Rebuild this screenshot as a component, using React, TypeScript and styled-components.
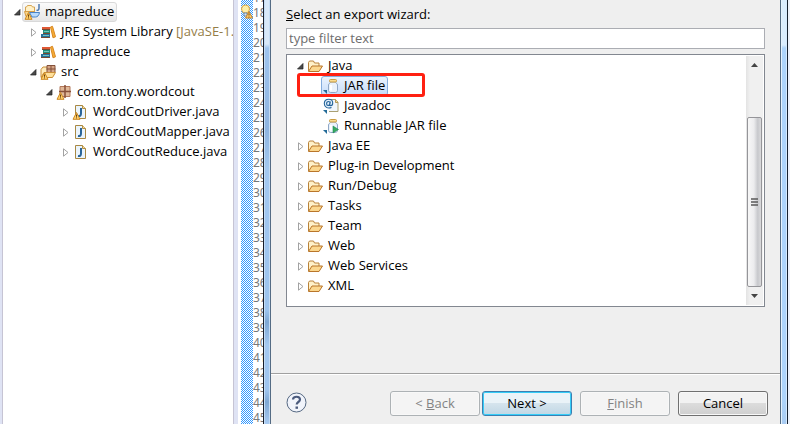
import React from "react";
import styled, { createGlobalStyle, css } from "styled-components";

const Global = createGlobalStyle`
  * { box-sizing: border-box; }
  body {
    margin: 0;
    overflow: hidden;
    background: #fff;
    color: #000;
    font: 13px/20px "Open Sans", "Noto Sans", sans-serif;
  }
  ul { list-style: none; margin: 0; padding: 0; }
  svg { display: block; flex: none; }
`;

const Screen = styled.main`
  display: flex;
  height: 100vh;
  overflow: hidden;
`;

const Explorer = styled.nav`
  flex: 0 0 238px;
  min-width: 0;
  display: flex;
  background: #dfe3f4;
  padding: 0 4px 0 2px;
`;

const ExplorerPane = styled.div`
  flex: 1;
  min-width: 0;
  overflow: hidden;
  background: #fff;
  border: solid #c6c4d4;
  border-width: 0 1px;
  padding: 2px 0 0 10px;
`;

const TreeRow = styled.div<{ $level: number }>`
  display: flex;
  align-items: center;
  height: 20px;
  padding-left: ${(p) => p.$level * 16}px;
  white-space: nowrap;
`;

const Twisty = styled.span`
  flex: none;
  width: 9px;
  display: flex;
  justify-content: center;
`;

const ItemLabel = styled.span<{ $selected?: "inactive" | "active" }>`
  display: flex;
  align-items: flex-start;
  gap: 5px;
  height: 20px;
  line-height: 16px;
  padding: 0 2px 0 1px;
  border: 1px solid transparent;
  border-radius: 3px;
  > svg { align-self: center; }
  ${(p) =>
    p.$selected === "inactive" &&
    css`
      border-color: #d9d9d9;
      background: linear-gradient(#fafafa, #e6e6e6);
    `}
  ${(p) =>
    p.$selected === "active" &&
    css`
      border-color: #84acdd;
      background: linear-gradient(#ebf3fd, #c5dcfa);
    `}
`;

const Qualifier = styled.span`
  color: #957d47;
`;

const Editor = styled.section`
  flex: 0 0 26px;
  display: flex;
  padding-left: 3px;
  background: #fff;
  border-right: 1px solid #171c2a;
  overflow: hidden;
`;

const Ruler = styled.div`
  flex: 0 0 12px;
  padding-top: 4px;
  background: repeating-conic-gradient(#3399ff 0 25%, #fff 0 50%) 0 0 / 2px 2px;
`;

const LineNumbers = styled.ol`
  list-style: none;
  margin: -10px 0 0;
  padding: 0;
  width: 10px;
  overflow: hidden;
  color: #787878;
  font: 12px/15px "Noto Sans", sans-serif;
`;

const Dialog = styled.section`
  flex: 1;
  min-width: 0;
  display: flex;
  background: #efefef;
`;

const FrameEdge = styled.div<{ $side: "left" | "right" }>`
  flex: none;
  width: ${(p) => (p.$side === "left" ? 7 : 10)}px;
  border: solid #546b84;
  border-width: ${(p) => (p.$side === "left" ? "0 1px 0 0" : "0 0 0 1px")};
  background: ${(p) =>
    p.$side === "left"
      ? "linear-gradient(90deg, #c5dcf4 0 1px, transparent 1px 5px, #c5dcf4 5px), linear-gradient(#d9e8f8 0 44px, #9fc4ee 48px, #8fb4e0 130px, #a4c8f0 170px, #9dc3ed 310px, #7fa7d3 322px, #a4c8f0 345px, #9fc4ee 390px, #7fa7d3 402px, #a9cbf2 424px)"
      : "linear-gradient(90deg, #e3f1fd 0 1px, transparent 1px 5px, #d5eaff 5px 6px, #15202f 6px 7px, #eef2fb 7px), linear-gradient(#d9ecfe 0 45px, #acd3fb 48px 400px, #a9cbf2)"};
`;

const DialogMain = styled.form`
  flex: 1;
  min-width: 0;
  display: flex;
  flex-direction: column;
`;

const WizardBody = styled.div`
  flex: 1;
  display: flex;
  flex-direction: column;
  padding: 4px 15px 0;
`;

const FilterLabel = styled.label`
  display: block;
  height: 24px;
  &::first-letter { text-decoration: underline; }
`;

const FilterInput = styled.input`
  width: 100%;
  height: 21px;
  border: 1px solid #abadb3;
  padding: 0 2px 2px;
  margin-bottom: 5px;
  background: #fff;
  font: inherit;
  &::placeholder { color: #6d6d6d; opacity: 1; }
`;

const WizardList = styled.div`
  display: flex;
  height: 253px;
  background: #fff;
  border: 1px solid #828790;
  padding: 1px;
`;

const WizardItems = styled.ul`
  flex: 1;
  padding: 0 0 0 8px;
`;

const HighlightAnchor = styled.li`
  position: relative;
`;

const Highlight = styled.div`
  position: absolute;
  left: 1px;
  top: -3px;
  width: 128px;
  height: 24px;
  border: 3px solid #ff2011;
  border-radius: 3px;
`;

const Scrollbar = styled.div`
  flex: 0 0 17px;
  display: flex;
  flex-direction: column;
  align-items: center;
  background: linear-gradient(90deg, #e3e3e3, #f0f0f0 4px);
`;

const ScrollArrow = styled.div`
  height: 18px;
  display: flex;
  align-items: center;
`;

const ScrollGap = styled.div`
  height: 43px;
`;

const ScrollThumb = styled.div`
  flex: 1;
  width: 15px;
  display: flex;
  align-items: center;
  justify-content: center;
  border: 1px solid #959599;
  border-radius: 2px;
  background: linear-gradient(90deg, #f7f7f7, #ececee 45%, #c7c8cc 75%, #dadadc);
`;

const Footer = styled.footer`
  display: flex;
  align-items: center;
  height: 51px;
  border-top: 1px solid #a0a0a0;
  box-shadow: inset 0 1px #fff;
  padding: 9px 12px 0 15px;
`;

const HelpButton = styled.button`
  width: 21px;
  height: 21px;
  padding: 0;
  border: 0;
  background: none;
  margin: 0 auto 2px 0;
`;

const ButtonGroup = styled.div<{ $gap: number }>`
  display: flex;
  gap: ${(p) => p.$gap}px;
`;

const PushButton = styled.button<{ $primary?: boolean }>`
  width: 90px;
  height: 25px;
  padding: 0 0 2px;
  border: 1px solid #707070;
  border-radius: 3px;
  background: linear-gradient(#f2f2f2 0 50%, #dcdcdc 50%, #cfcfcf);
  box-shadow: inset 0 0 0 1px #f8f8f8;
  color: #000;
  font: inherit;
  &:disabled {
    border-color: #adb2b5;
    background: #f4f4f4;
    color: #838383;
  }
  ${(p) =>
    p.$primary &&
    css`
      border-color: #3c7fb1;
      background: linear-gradient(#eaf3f8 0 50%, #d5e4ed 50%, #c0d7e5);
      box-shadow: inset 0 0 0 1px #35cdf8;
    `}
`;

const WarningMark = () => (
  <g>
    <path d="M4.500 8.500 8 15.300H1z" fill="#ffd06a" stroke="#cc8924" strokeLinejoin="round" />
    <path d="M4.500 10.500v2.300M4.500 13.400v1" stroke="#684312" />
  </g>
);

const Icon = ({ children }: { children: React.ReactNode }) => (
  <svg width="16" height="16" viewBox="0 0 16 16" aria-hidden="true">{children}</svg>
);

const ProjectIcon = () => (
  <Icon>
    <path d="M1.500 8V3h1l1-1.500h4L8.500 3h2v5" fill="#fff0c6" stroke="#d6a552" />
    <path d="M.5 7.500h9.500L8 12.500H2z" fill="#f8d58b" stroke="#d69d45" />
    <path d="M5.500 8.500h10c-.5 3-2 4.500-4 4.500H8z" fill="#b8dafb" stroke="#4a83c6" />
    <path d="M15 0v4c0 2-1 2.500-2.500 2.300" fill="none" stroke="#4d7ab0" strokeWidth="1.500" />
    <WarningMark />
  </Icon>
);

const LibraryIcon = () => (
  <Icon>
    <path d="M2 3h8v3H2z" fill="#df5935" />
    <path d="M3 6h7v4H3z" fill="#238d79" />
    <path d="M1 10h9v4H1z" fill="#276f9c" />
    <path d="M2 5.500h8M3 9.500h7M1 13.500h9" stroke="#784a31" />
    <path d="M4 7.500h5M3 11.500h6" stroke="#75c5bd" />
    <path d="m10.500 3 2-.7 3 10.500-2.500 1z" fill="#f5ad36" stroke="#d88723" />
  </Icon>
);

const SourceIcon = () => (
  <Icon>
    <path d="M1 13V5.500L3 3h4l1 2h5v3" fill="#ffecba" stroke="#c98e38" />
    <path d="M7 1.500h8v7H7z" fill="#d6a586" stroke="#83503a" />
    <path d="M11 1v8M6.500 5h9" stroke="#83503a" />
    <path d="M1 13.500 4 8.500h11.500L12.500 13.500z" fill="#ffe09a" stroke="#c98e38" />
    <WarningMark />
  </Icon>
);

const PackageIcon = () => (
  <Icon>
    <path d="M4 2.500h10v10H4z" fill="#e0b898" stroke="#b27759" />
    <path d="M9 1v13M3 7.500h12" stroke="#885038" strokeWidth="1.500" />
    <WarningMark />
  </Icon>
);

const JavaFileIcon = ({ warning }: { warning?: boolean }) => (
  <Icon>
    <path d="M3.500 1.500h7l3 3v10h-10z" fill="#eaf4fc" stroke="#a88843" />
    <path d="M10.500 1.500v3h3" fill="#f5dda0" stroke="#b38e43" />
    <path d="M9 4v5.500c0 2-1 2.800-3 2.500" fill="none" stroke="#2a6599" strokeWidth="2" />
    {warning && <WarningMark />}
  </Icon>
);

const FolderIcon = () => (
  <Icon>
    <path d="M1.500 13V4.500l1-1.500h4l1 2h4.500v3" fill="#fff1c8" stroke="#b9823a" />
    <path d="M1.500 13.500 5 8h10.500L12 13.500z" fill="#fbd78d" stroke="#b9762b" strokeLinejoin="round" />
  </Icon>
);

const WizardCorner = () => <path d="M0 12h4v4z" fill="#236b98" />;

const JarIcon = ({ run }: { run?: boolean }) => (
  <Icon>
    <WizardCorner />
    <path d="M7.500 4h5c0 1 2 1.500 2 3v5.500c0 1-1 2-2 2h-5c-1 0-2-1-2-2V7c0-1.500 2-2 2-3z" fill="#eaf2fb" stroke="#8fa7c6" />
    <rect x="6.500" y="1.500" width="7" height="2.500" rx="1" fill="#f9dc91" stroke="#c99b40" />
    <path d="M8 7v5.500" stroke="#fff" strokeWidth="2" />
    {run && <path d="m10 8 5.500 3.500L10 15z" fill="#36aa62" stroke="#178248" strokeWidth=".5" />}
  </Icon>
);

const JavadocIcon = () => (
  <Icon>
    <WizardCorner />
    <path d="M7.500 1.500h5l2.500 2.500v9.500H6" fill="#f0f6fd" stroke="#a9a073" />
    <path d="M12.500 1.500v3H15" fill="#f3dc9e" stroke="#b29757" />
    <circle cx="5.500" cy="5.500" r="4.500" fill="#e3effa" />
    <path d="M8.500 9.500C4.500 11 1.300 9 1.300 5.600 1.300 3 3.200 1.200 5.700 1.200c2.500 0 4 1.600 4 3.700 0 1.700-.8 2.700-1.900 2.700-1 0-1.200-.8-.9-1.800l.5-2.300M7 5.300c0-1.200-.6-1.800-1.500-1.800-1.200 0-1.900 1-1.900 2.300 0 1 .5 1.700 1.400 1.700 1.100 0 1.800-1 2-2.200" fill="none" stroke="#25659b" strokeWidth="1.100" />
  </Icon>
);

const OpenTwisty = () => (
  <svg width="7" height="7" aria-hidden="true"><path d="M6 .5V6H.5z" fill="#4a4a4a" stroke="#202020" strokeWidth=".7" /></svg>
);
const ClosedTwisty = () => (
  <svg width="6" height="9" aria-hidden="true"><path d="M.5.8v7.400L5 4.500z" fill="#fff" stroke="#a2a2a2" /></svg>
);

type Node = {
  level: number;
  open?: boolean;
  icon: React.ReactNode;
  text: string;
  note?: string;
  selected?: boolean;
};

const explorerNodes: Node[] = [
  { level: 0, open: true, icon: <ProjectIcon />, text: "mapreduce", selected: true },
  { level: 1, icon: <LibraryIcon />, text: "JRE System Library", note: "[JavaSE-1." },
  { level: 1, icon: <LibraryIcon />, text: "mapreduce" },
  { level: 1, open: true, icon: <SourceIcon />, text: "src" },
  { level: 2, open: true, icon: <PackageIcon />, text: "com.tony.wordcout" },
  { level: 3, icon: <JavaFileIcon warning />, text: "WordCoutDriver.java" },
  { level: 3, icon: <JavaFileIcon />, text: "WordCoutMapper.java" },
  { level: 3, icon: <JavaFileIcon />, text: "WordCoutReduce.java" },
];

const javaWizards = [
  { icon: <JarIcon />, text: "JAR file", selected: true },
  { icon: <JavadocIcon />, text: "Javadoc" },
  { icon: <JarIcon run />, text: "Runnable JAR file" },
];

const closedFolders = [
  "Java EE", "Plug-in Development", "Run/Debug", "Tasks", "Team", "Web", "Web Services", "XML",
];

const lineNumbers = Array.from({ length: 29 }, (_, i) => 17 + i);

export default function App() {
  return (
    <Screen>
      <Global />
      <Explorer aria-label="Package Explorer">
        <ExplorerPane>
          <ul>
            {explorerNodes.map((n, i) => (
              <li key={i}>
                <TreeRow $level={n.level}>
                  <Twisty>{n.open ? <OpenTwisty /> : <ClosedTwisty />}</Twisty>
                  <ItemLabel $selected={n.selected ? "inactive" : undefined}>
                    {n.icon}
                    <span>{n.text}{n.note && <Qualifier> {n.note}</Qualifier>}</span>
                  </ItemLabel>
                </TreeRow>
              </li>
            ))}
          </ul>
        </ExplorerPane>
      </Explorer>
      <Editor aria-label="Editor">
        <Ruler>
          <svg width="12" height="15" viewBox="0 0 12 15" aria-hidden="true">
            <circle cx="4.500" cy="5" r="4" fill="#fff0a8" stroke="#d8a545" />
            <path d="M3 9h3v3H3z" fill="#d7e5f3" stroke="#718eab" />
            <path d="M8 7.500 11.500 14h-7z" fill="#ffcd66" stroke="#c9882d" />
            <path d="M8 9.500v2M8 12.500v1" stroke="#684312" />
          </svg>
        </Ruler>
        <LineNumbers>
          {lineNumbers.map((n) => <li key={n}>{n}</li>)}
        </LineNumbers>
      </Editor>
      <Dialog role="dialog" aria-label="Export">
        <FrameEdge $side="left" />
        <DialogMain onSubmit={(e) => e.preventDefault()}>
          <WizardBody>
            <FilterLabel htmlFor="filter">Select an export wizard:</FilterLabel>
            <FilterInput id="filter" type="text" placeholder="type filter text" />
            <WizardList>
              <WizardItems>
                <li>
                  <TreeRow $level={0}>
                    <Twisty><OpenTwisty /></Twisty>
                    <ItemLabel><FolderIcon />Java</ItemLabel>
                  </TreeRow>
                </li>
                {javaWizards.map((w) => (
                  <HighlightAnchor key={w.text}>
                    <TreeRow $level={1}>
                      <Twisty />
                      <ItemLabel $selected={w.selected ? "active" : undefined}>{w.icon}{w.text}</ItemLabel>
                    </TreeRow>
                    {w.selected && <Highlight />}
                  </HighlightAnchor>
                ))}
                {closedFolders.map((name) => (
                  <li key={name}>
                    <TreeRow $level={0}>
                      <Twisty><ClosedTwisty /></Twisty>
                      <ItemLabel><FolderIcon />{name}</ItemLabel>
                    </TreeRow>
                  </li>
                ))}
              </WizardItems>
              <Scrollbar aria-hidden="true">
                <ScrollArrow><svg width="7" height="4"><path d="M3.500 0 7 4H0z" fill="#444" /></svg></ScrollArrow>
                <ScrollGap />
                <ScrollThumb>
                  <svg width="7" height="8"><path d="M0 1h7M0 4h7M0 7h7" stroke="#626262" strokeWidth="2" strokeOpacity=".8" /></svg>
                </ScrollThumb>
                <ScrollArrow><svg width="7" height="4"><path d="M0 0h7L3.500 4z" fill="#444" /></svg></ScrollArrow>
              </Scrollbar>
            </WizardList>
          </WizardBody>
          <Footer>
            <HelpButton type="button" aria-label="Help">
              <svg width="21" height="21" viewBox="0 0 21 21">
                <circle cx="10.500" cy="10.500" r="9.500" fill="#f1f4fb" stroke="#566983" />
                <path d="M7 7.500C7 3.800 14 3.800 14 7.500c0 2.500-3.300 2.500-3.300 5" fill="none" stroke="#4b5b7d" strokeWidth="2.200" />
                <path d="M9.500 14.500H12v2.300H9.500z" fill="#4b5b7d" />
              </svg>
            </HelpButton>
            <ButtonGroup $gap={8}>
              <ButtonGroup $gap={2}>
                <PushButton type="button" disabled>&lt; <u>B</u>ack</PushButton>
                <PushButton type="submit" $primary>Next &gt;</PushButton>
              </ButtonGroup>
              <ButtonGroup $gap={8}>
                <PushButton type="button" disabled><u>F</u>inish</PushButton>
                <PushButton type="button">Cancel</PushButton>
              </ButtonGroup>
            </ButtonGroup>
          </Footer>
        </DialogMain>
        <FrameEdge $side="right" />
      </Dialog>
    </Screen>
  );
}
